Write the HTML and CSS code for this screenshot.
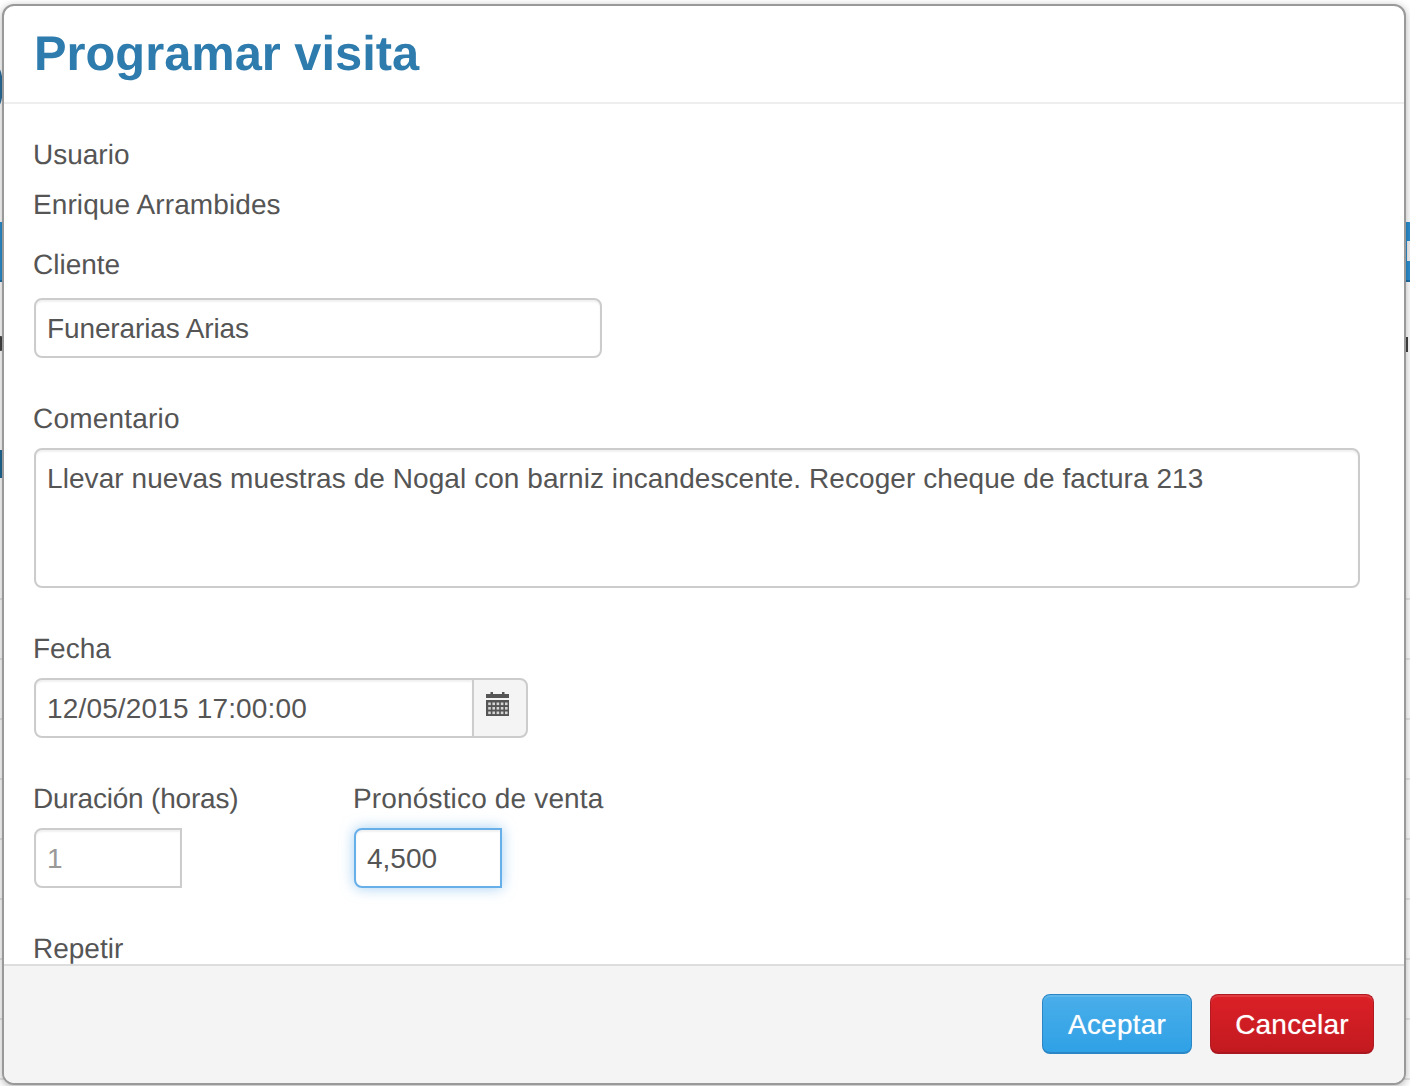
FILE: index.html
```html
<!DOCTYPE html>
<html lang="en">
<head>
  <meta charset="UTF-8" />
  <title>Programar visita</title>
  <link rel="stylesheet" href="styles.css">
</head>
<body>
  <div class="backdrop">
    <span class="peek peek-rows"></span>
    <span class="peek peek-ring"></span>
    <span class="peek peek-bar-left"></span>
    <span class="peek peek-bar-right"></span>
    <span class="peek peek-text-left"></span>
    <span class="peek peek-text-right"></span>
    <span class="peek peek-arc"></span>
  </div>
  <div class="modal">
    <div class="modal-header">
      <h3>Programar visita</h3>
    </div>
    <div class="modal-body">
      <label>Usuario</label>
      <p class="static">Enrique Arrambides</p>
      <div class="group">
        <label>Cliente</label>
        <input type="text" class="field field-cliente" value="Funerarias Arias" />
      </div>
      <div class="group">
        <label class="label-comentario">Comentario</label>
        <textarea class="field field-comentario">Llevar nuevas muestras de Nogal con barniz incandescente. Recoger cheque de factura 213</textarea>
      </div>
      <div class="group">
        <label>Fecha</label>
        <div class="date-group">
          <input type="text" class="field field-fecha" value="12/05/2015 17:00:00" />
          <span class="addon">
            <svg width="23" height="24" viewBox="0 0 23 24">
              <path fill="#555" d="M4.500 0h2.500v2h9V0h2.500v2H23v4H0V2h4.500zM0 8h23v16H0z"/>
              <g fill="#d5d5d5">
                <rect x="2.200" y="10.500" width="2.600" height="2.600"/><rect x="6.400" y="10.500" width="2.600" height="2.600"/><rect x="10.600" y="10.500" width="2.600" height="2.600"/><rect x="14.800" y="10.500" width="2.600" height="2.600"/><rect x="19" y="10.500" width="2.600" height="2.600"/>
                <rect x="2.200" y="15" width="2.600" height="2.600"/><rect x="6.400" y="15" width="2.600" height="2.600"/><rect x="10.600" y="15" width="2.600" height="2.600"/><rect x="14.800" y="15" width="2.600" height="2.600"/><rect x="19" y="15" width="2.600" height="2.600"/>
                <rect x="2.200" y="19.500" width="2.600" height="2.600"/><rect x="6.400" y="19.500" width="2.600" height="2.600"/><rect x="10.600" y="19.500" width="2.600" height="2.600"/><rect x="14.800" y="19.500" width="2.600" height="2.600"/><rect x="19" y="19.500" width="2.600" height="2.600"/>
              </g>
            </svg>
          </span>
        </div>
      </div>
      <div class="group row">
        <div class="col-duracion">
          <label class="label-duracion">Duración (horas)</label>
          <input type="text" class="field field-small field-muted" value="1" />
        </div>
        <div>
          <label class="label-pronostico">Pronóstico de venta</label>
          <input type="text" class="field field-small field-focus" value="4,500" />
        </div>
      </div>
      <div class="group">
        <label>Repetir</label>
      </div>
    </div>
    <div class="modal-footer">
      <button class="btn btn-primary">Aceptar</button>
      <button class="btn btn-danger">Cancelar</button>
    </div>
  </div>
</body>
</html>
```

FILE: styles.css
```css
* {
  box-sizing: border-box;
  margin: 0;
  padding: 0;
}
html, body {
  height: 100%;
  overflow: hidden;
}
body {
  font-family: "Liberation Sans", Arial, sans-serif;
  font-size: 28px;
  line-height: 40px;
  color: #555;
  background: #fff;
  padding: 4px 4px 0 2px;
  text-rendering: geometricPrecision;
}

/* what shows of the page behind the modal */
.backdrop {
  position: absolute;
  inset: 0;
}
.peek {
  position: absolute;
}
.peek-rows {
  left: 0;
  right: 0;
  top: 540px;
  bottom: 0;
  background: repeating-linear-gradient(transparent 0 58px, #e6e6e6 58px 60px);
}
.peek-ring {
  left: -9px;
  top: 67px;
  width: 12px;
  height: 40px;
  border: 4px solid #2a6f9e;
  border-radius: 50%;
}
.peek-bar-left {
  left: 0;
  top: 222px;
  width: 3px;
  height: 60px;
  background: #2d8fcf;
  border-bottom: 2px solid #1f6fa5;
}
.peek-bar-right {
  right: 0;
  top: 222px;
  width: 6px;
  height: 60px;
  background: #2d8fcf;
  border-bottom: 2px solid #1f6fa5;
}
.peek-bar-right::after {
  content: "";
  position: absolute;
  right: 0;
  top: 19px;
  width: 3px;
  height: 20px;
  background: #f2f2f2;
}
.peek-text-left {
  left: 0;
  top: 336px;
  width: 4px;
  height: 15px;
  border-radius: 0 6px 6px 0;
  background: #444;
}
.peek-text-right {
  right: 2px;
  top: 337px;
  width: 3px;
  height: 15px;
  background: #444;
}
.peek-arc {
  left: 0;
  top: 450px;
  width: 4px;
  height: 28px;
  background: #1f6a96;
}

.modal {
  position: relative;
  height: 1081px;
  display: flex;
  flex-direction: column;
  background: #fff;
  border: 2px solid #999;
  border-radius: 12px;
  overflow: hidden;
  box-shadow: 0 2px 8px rgba(0, 0, 0, 0.3);
}
.modal-header {
  height: 98px;
  padding-left: 30px;
  border-bottom: 2px solid #eee;
  flex-shrink: 0;
}
h3 {
  font-size: 48.800px;
  line-height: 96px;
  font-weight: 700;
  color: #2e7bad;
}
.modal-body {
  flex: 1;
  overflow: hidden;
  padding: 31px 0 0 30px;
}
label {
  display: block;
  margin-left: -1px;
}
.static {
  margin: 10px 0 0 -1px;
  letter-spacing: 0.1px;
}
.group {
  margin-top: 20px;
}
.group label {
  margin-bottom: 9px;
}
.group + .group {
  margin-top: 41px;
}
.field {
  display: block;
  height: 60px;
  padding: 2px 11px 0;
  border: 2px solid #ccc;
  border-radius: 8px;
  font: inherit;
  color: #555;
  background: #fff;
  outline: none;
  box-shadow: inset 0 2px 2px rgba(0, 0, 0, 0.06);
}
.field-cliente {
  width: 568px;
  margin-top: 13px;
  letter-spacing: -0.12px;
}
.label-comentario {
  letter-spacing: 0.2px;
}
.field-comentario {
  width: 1326px;
  height: 140px;
  padding: 9px 11px;
  resize: none;
  overflow: hidden;
  letter-spacing: 0.07px;
}
.date-group {
  display: flex;
  width: 494px;
}
.field-fecha {
  flex: 1;
  min-width: 0;
  border-radius: 8px 0 0 8px;
  letter-spacing: 0.16px;
}
.addon {
  width: 56px;
  height: 60px;
  margin-left: -2px;
  padding: 0 6px 8px 0;
  display: flex;
  align-items: center;
  justify-content: center;
  background: #f4f4f4;
  border: 2px solid #ccc;
  border-radius: 0 8px 8px 0;
}
.row {
  display: flex;
}
.col-duracion {
  width: 320px;
}
.label-duracion {
  letter-spacing: -0.2px;
}
.label-pronostico {
  letter-spacing: 0.16px;
}
.field-small {
  width: 148px;
  border-radius: 8px 0 0 8px;
}
.field-muted {
  color: #999;
}
.field-focus {
  border-color: #66afe9;
  box-shadow: inset 0 2px 2px rgba(0, 0, 0, 0.06), 0 0 14px rgba(102, 175, 233, 0.6);
}
.modal-footer {
  height: 119px;
  flex-shrink: 0;
  display: flex;
  justify-content: flex-end;
  gap: 18px;
  padding: 28px 30px 0 0;
  background: #f4f4f4;
  border-top: 2px solid #ddd;
}
.btn {
  height: 60px;
  padding-top: 2px;
  border-radius: 8px;
  font: inherit;
  letter-spacing: 0.2px;
  color: #fff;
  cursor: pointer;
  text-shadow: 0 0 1px rgba(255, 255, 255, 0.6);
}
.btn-primary {
  width: 150px;
  border: 1px solid #2a86c4;
  border-bottom: 2px solid #2a86c4;
  background: linear-gradient(#4aaeea, #2fa1e6);
  box-shadow: inset 0 2px 0 rgba(255, 255, 255, 0.12);
}
.btn-danger {
  width: 164px;
  border: 1px solid #b01a20;
  border-bottom: 2px solid #a8181e;
  background: linear-gradient(#dc2027, #c21a20);
  box-shadow: inset 0 2px 0 rgba(255, 255, 255, 0.12);
}
```
